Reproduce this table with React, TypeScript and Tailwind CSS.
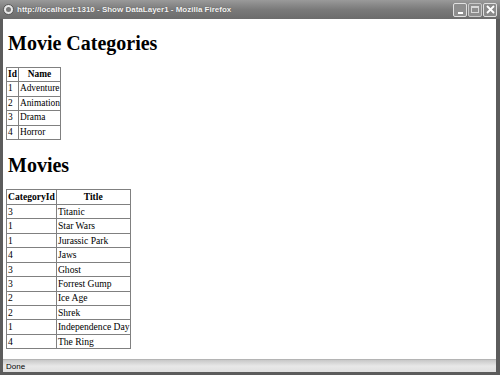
import React from "react";

const cats = [
  ["1", "Adventure"],
  ["2", "Animation"],
  ["3", "Drama"],
  ["4", "Horror"],
];
const movies = [
  ["3", "Titanic"],
  ["1", "Star Wars"],
  ["1", "Jurassic Park"],
  ["4", "Jaws"],
  ["3", "Ghost"],
  ["3", "Forrest Gump"],
  ["2", "Ice Age"],
  ["2", "Shrek"],
  ["1", "Independence Day"],
  ["4", "The Ring"],
];

export default function App() {
  const serif = { fontFamily: '"Liberation Serif", "Times New Roman", serif' };
  return (
    <div className="w-[500px] h-[375px] flex flex-col bg-[#5c5c5c] overflow-hidden">
      {/* Title bar */}
      <div className="h-[19px] flex items-center bg-gradient-to-b from-[#9a9a9a] via-[#7a7a7a] to-[#6c6c6c] pl-[3px] pr-[3px]">
        <div className="w-[11px] h-[11px] rounded-full bg-[#e8e8e8] border border-[#555] flex items-center justify-center">
          <div className="w-[5px] h-[5px] rounded-full bg-[#777]" />
        </div>
        <div
          className="ml-[3px] text-[8px] font-bold text-[#f4f4f4] leading-none"
          style={{ fontFamily: '"Liberation Sans", Arial, sans-serif', textShadow: "0 0 1px #444" }}
        >
          http://localhost:1310 - Show DataLayer1 - Mozilla Firefox
        </div>
        <div className="ml-auto flex gap-[1px]">
          <div className="w-[14px] h-[14px] rounded-[2px] border border-[#e0e0e0] bg-[#8e8e8e] flex items-end justify-center pb-[2px]">
            <div className="w-[5px] h-[2px] bg-white" />
          </div>
          <div className="w-[14px] h-[14px] rounded-[2px] border border-[#c8c8c8] bg-[#8e8e8e] flex items-center justify-center">
            <div className="w-[8px] h-[7px] border border-[#d8d8d8] border-t-2" />
          </div>
          <div className="w-[14px] h-[14px] rounded-[2px] border border-[#e0e0e0] bg-[#8a8a8a] flex items-center justify-center">
            <svg width="9" height="9" viewBox="0 0 9 9">
              <path d="M1 1 L8 8 M8 1 L1 8" stroke="white" strokeWidth="1.8" />
            </svg>
          </div>
        </div>
      </div>
      {/* Content */}
      <div className="flex-1 flex pl-[3px] pr-[4px] min-h-0">
        <div className="flex-1 bg-white pl-[3px] pt-[14px] border-b border-[#b4b4b4]" style={serif}>
          <h1 className="text-[20px] leading-[20px] font-bold text-black ml-[2px]">Movie Categories</h1>
          <table className="mt-[14px] border-collapse text-[9.4px] text-black">
            <tbody>
              <tr className="h-[14.4px]">
                <th className="border border-[#808080] w-[8px] px-[1px] font-bold text-center leading-none">Id</th>
                <th className="border border-[#808080] w-[39px] px-[1px] font-bold text-center leading-none">Name</th>
              </tr>
              {cats.map((r) => (
                <tr key={r[1]} className="h-[14.4px]">
                  <td className="border border-[#808080] px-[1px] leading-none">{r[0]}</td>
                  <td className="border border-[#808080] pl-[1px] pr-0 leading-none whitespace-nowrap">{r[1]}</td>
                </tr>
              ))}
            </tbody>
          </table>
          <h1 className="mt-[15px] text-[20px] leading-[20px] font-bold text-black ml-[2px]">Movies</h1>
          <table className="mt-[14.5px] border-collapse text-[9.6px] text-black">
            <tbody>
              <tr className="h-[14.45px]">
                <th className="border border-[#808080] w-[47px] px-[1px] font-bold text-center leading-none">CategoryId</th>
                <th className="border border-[#808080] w-[73px] px-[1px] font-bold text-center leading-none">Title</th>
              </tr>
              {movies.map((r, i) => (
                <tr key={i} className="h-[14.45px]">
                  <td className="border border-[#808080] px-[1px] leading-none">{r[0]}</td>
                  <td className="border border-[#808080] pl-[1px] pr-0 leading-none whitespace-nowrap">{r[1]}</td>
                </tr>
              ))}
            </tbody>
          </table>
        </div>
      </div>
      {/* Status bar */}
      <div className="h-[15px] flex pl-[3px] pr-[4px] pb-[3px]">
        <div className="flex-1 bg-gradient-to-b from-[#c8c8c8] via-[#e8e8e8] to-[#e0e0e0] flex items-center pl-[3px] pt-[1px]">
          <span className="text-[8px] text-black leading-none" style={{ fontFamily: '"Liberation Sans", Arial, sans-serif' }}>
            Done
          </span>
        </div>
      </div>
    </div>
  );
}
